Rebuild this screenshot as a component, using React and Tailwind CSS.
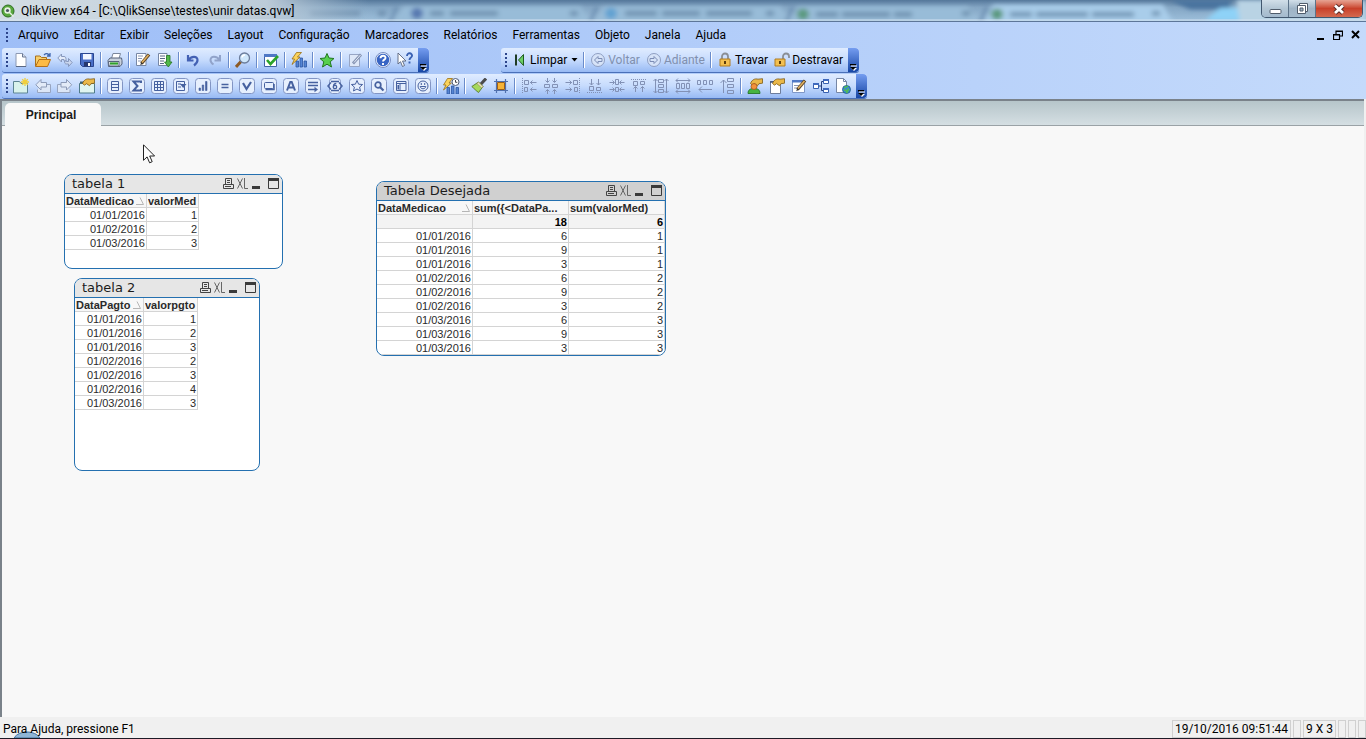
import React from "react";

const INK = "#46619f";
const GREY = "#8291b5";

function Svg({ children, w = 16 }) {
  return (
    <svg width={w} height="16" viewBox={`0 0 ${w} 16`} fill="none" aria-hidden="true">
      {children}
    </svg>
  );
}

function Boxed({ children }) {
  return (
    <Svg>
      <rect x="0.5" y="0.5" width="15" height="15" rx="3" fill="#e6effd" stroke="#8295c4" />
      {children}
    </Svg>
  );
}

const Pencil = () => (
  <>
    <path d="M6.500 11.500L14 2.500" stroke="#5b4324" strokeWidth="3.200" />
    <path d="M7 10.500L13.500 3" stroke="#e2b160" strokeWidth="1.600" />
    <path d="M5.200 13.200l1-3 1.800 1.600z" fill="#333" />
  </>
);
const HandCard = () => (
  <path d="M3.500 5.500C5 1.500 8 0.300 11 1.200l4.500-.5v4.500l-3.500.5-1.500 2-3-2-2 1.500z" fill="#eab849" stroke="#7d5a14" strokeWidth="0.800" />
);

const icons = {
  novo: (
    <Svg>
      <path d="M3 1.500h6.500l3.500 3.500v9.500H3z" fill="#fff" stroke="#8c99b3" />
      <path d="M9.500 1.500V5H13" fill="#d5deec" stroke="#6a7894" />
      <path d="M3 14.500h10" stroke="#5a6884" />
    </Svg>
  ),
  abrir: (
    <Svg>
      <path d="M0.500 14V4h4.500l1.500 1.500h5V8" fill="#f7cf6a" stroke="#a8711c" />
      <path d="M0.500 14.500L4 7.500h11.500l-3 7z" fill="#fdbb45" stroke="#b4701a" />
      <path d="M9 3c2-2 4.500-1.500 5.500.5M15 1v3h-3" stroke="#3e66b0" strokeWidth="1.300" />
    </Svg>
  ),
  atualizar: (
    <Svg>
      <path d="M0.800 6L4.500 2v2.500h2.500c1.500 0 2 1 2 3v1.500H7V7.500H4.500V10z" fill="#e3ebf9" stroke="#8798bd" />
      <path d="M15.200 10.500l-3.700 4V12H9.500c-1.500 0-2-1-2-3h2v.5h2V6.500z" fill="#c9d6ee" stroke="#8798bd" />
    </Svg>
  ),
  salvar: (
    <Svg>
      <path d="M1.500 1.500h13v13h-11l-2-2z" fill="#4a6fc7" stroke="#2b4690" />
      <path d="M4 2h8.500v5.500H4z" fill="#f2f6ff" />
      <path d="M5 10h7v4.500H5z" fill="#26376e" />
      <path d="M9 11h2v3H9z" fill="#fff" />
    </Svg>
  ),
  imprimir: (
    <Svg>
      <path d="M4.500 6.500L6 1.500h7.500l-1.500 5z" fill="#fff" stroke="#7a869b" />
      <path d="M1 8.500L3 6h11.500l.5 2.500V12l-2 2.500H1.500z" fill="#c8d1dc" stroke="#56627a" />
      <path d="M1.500 9.500h10.500v4.500H2z" fill="#eef2f6" stroke="#56627a" />
      <path d="M3 11.500h8" stroke="#31a02c" strokeWidth="2.200" />
    </Svg>
  ),
  editar: (
    <Svg>
      <path d="M1.500 1.500h9.500v12H1.500z" fill="#fff" stroke="#7787a5" />
      <path d="M3 4h5M3 6.500h4M3 9h3" stroke="#8a97b4" />
      <Pencil />
    </Svg>
  ),
  recarregar: (
    <Svg>
      <path d="M1.500 1.500h8.500v12H1.500z" fill="#fff" stroke="#7787a5" />
      <path d="M3 4h5M3 6.500h5M3 9h4M3 11.500h4" stroke="#5a6884" />
      <path d="M9.500 3.500h3.500v6.500h2l-3.700 5L7.500 10h2z" fill="#52b848" stroke="#23751f" strokeWidth="0.800" />
    </Svg>
  ),
  desfazer: (
    <Svg>
      <path d="M3 3v5.500h5.500M3.500 8C6 4 12.500 3.500 12.500 8c0 2-1.500 4-3.500 5.500" stroke="#4361b4" strokeWidth="2.200" />
    </Svg>
  ),
  refazer: (
    <Svg>
      <path d="M13 3v5.500H7.500M12.500 8C10 4 3.500 3.500 3.500 8c0 2 1.500 3.500 3 4.500" stroke="#91a3ca" strokeWidth="2" />
    </Svg>
  ),
  pesquisar: (
    <Svg>
      <path d="M1 15l5-5.500" stroke="#8d5a24" strokeWidth="3" />
      <circle cx="9.500" cy="6" r="5" fill="#cfe7fb" stroke="#6c7d9b" strokeWidth="1.300" />
      <path d="M7 5.500a3 3 0 0 1 3-2.500" stroke="#fff" strokeWidth="1.500" />
    </Svg>
  ),
  selecoes: (
    <Svg>
      <path d="M1.500 2.500h12v12h-12z" fill="#fff" stroke="#3f62a5" />
      <path d="M1 2h13v3H1z" fill="#4f78c6" />
      <path d="M4 8l3.500 4L15 4" stroke="#2ca32a" strokeWidth="2.600" />
    </Svg>
  ),
  grafico: (
    <Svg>
      <path d="M5 15V9h2.500v6zM9 15V6h2.500v9zM13 15V9h2.500v6z" fill="#5585d4" stroke="#2c55a2" strokeWidth="0.800" />
      <path d="M5.500 0.500h5L6.500 5h2.500L1 12.500 3.500 7H1z" fill="#fbd35c" stroke="#9b7012" strokeWidth="0.800" />
    </Svg>
  ),
  estrela: (
    <Svg>
      <path d="M8 1.500l2 4.500 5 .5-3.800 3.300L12.500 15 8 12.200 3.500 15l1.300-5.200L1 6.500 6 6z" fill="#57d04e" stroke="#21771d" />
    </Svg>
  ),
  nota: (
    <Svg>
      <path d="M2.500 2.500h10v12h-10z" fill="#dfe8f8" stroke="#97a5c4" />
      <path d="M6 11.500L14 2.500" stroke="#8492b2" strokeWidth="2.800" />
      <path d="M7 10.500L13.500 3" stroke="#e6edf9" />
    </Svg>
  ),
  ajuda: (
    <Svg>
      <circle cx="8" cy="8" r="7" fill="#3764c4" stroke="#e9effb" strokeWidth="1.500" />
      <circle cx="8" cy="8" r="7.500" stroke="#5a75b3" strokeWidth="0.800" />
      <path d="M5.500 6.300C5.500 2.700 10.800 3 10.500 6 10.400 7.600 8 7.700 8 9.500M8 11v2" stroke="#fff" strokeWidth="1.900" />
    </Svg>
  ),
  contexto: (
    <Svg>
      <path d="M1 1v11l2.500-2.300L5.500 14.500l2-1-2-4.500H9z" fill="#fff" stroke="#58637c" strokeWidth="0.900" />
      <path d="M10 4c0-4 5.500-3.200 5 0-.2 1.600-2.500 1.700-2.500 4M12.500 9.500v2" stroke="#3a62b4" strokeWidth="1.900" />
    </Svg>
  ),
  novaPasta: (
    <Svg>
      <path d="M0.500 3.500h6l1.500 2h6.500v9.500H0.500z" fill="#d9f2ec" stroke="#5d8494" />
      <path d="M12 0v8M8 4h8M9.200 1.200l5.600 5.600M14.800 1.200L9.200 6.800" stroke="#f1cf3c" strokeWidth="1.300" />
    </Svg>
  ),
  pastaEsq: (
    <Svg>
      <path d="M6 6.500h9.500v8H2.500v-3" stroke="#98a5bf" fill="#dce6f6" />
      <path d="M6 1.500v3h5.500V9H6v3L0.800 6.800z" fill="#e3ebf8" stroke="#8d9bb8" />
    </Svg>
  ),
  pastaDir: (
    <Svg>
      <path d="M9 6.500H0.500v8h12.500v-3" stroke="#98a5bf" fill="#dce6f6" />
      <path d="M9.500 1.500v3H4V9h5.500v3l5.200-5.200z" fill="#e3ebf8" stroke="#8d9bb8" />
    </Svg>
  ),
  propPasta: (
    <Svg>
      <path d="M0.500 5.500h15v9.500h-15z" fill="#e0f5f0" stroke="#4f7b88" />
      <path d="M1 4.500h14" stroke="#3b6374" strokeWidth="2" />
      <HandCard />
    </Svg>
  ),
  listBox: (
    <Boxed>
      <path d="M4.500 3.500h7v9h-7zM4.500 6.500h7M4.500 9.500h7" stroke={INK} />
    </Boxed>
  ),
  estatistica: (
    <Boxed>
      <path d="M12 5V3.500H4.500L8.500 8l-4 4.500H12V11" stroke={INK} strokeWidth="2" />
    </Boxed>
  ),
  tabela: (
    <Boxed>
      <path d="M3.500 3.500h9v9h-9zM3.500 6.500h9M3.500 9.500h9M6.500 3.500v9M9.500 3.500v9" stroke={INK} />
    </Boxed>
  ),
  multi: (
    <Boxed>
      <path d="M3.500 3.500h8v9h-8zM5 6h3M5 9h3" stroke={INK} />
      <path d="M7 6h6.500L10.200 10z" fill={INK} />
    </Boxed>
  ),
  barras: (
    <Boxed>
      <path d="M4 12.500v-2.500h1.500v2.500zM7.200 12.500V7h1.500v5.500zM10.500 12.500v-9H12v9z" fill={INK} stroke={INK} strokeWidth="0.600" />
    </Boxed>
  ),
  entrada: (
    <Boxed>
      <path d="M4.500 6.500h7M4.500 9.500h7" stroke={INK} strokeWidth="1.600" />
    </Boxed>
  ),
  selAtual: (
    <Boxed>
      <path d="M4 5l3.500 6L12 4" stroke={INK} strokeWidth="2.200" />
    </Boxed>
  ),
  botao: (
    <Boxed>
      <rect x="3.500" y="4.500" width="9" height="6" rx="1" fill="#e6effd" stroke={INK} />
      <path d="M4.500 11.500h8.500V6" stroke={INK} strokeWidth="1.500" />
    </Boxed>
  ),
  texto: (
    <Boxed>
      <path d="M4 12.500L7.300 4h1.400L12 12.500M5.500 9.500h5" stroke={INK} strokeWidth="2" />
    </Boxed>
  ),
  linha: (
    <Boxed>
      <path d="M3 4.500h10M3 7.500h10M3 11.500h7" stroke={INK} strokeWidth="1.500" />
      <path d="M9.500 8.800l3.500 2.700-3.500 2.700z" fill={INK} />
    </Boxed>
  ),
  deslize: (
    <Svg>
      <rect x="2.500" y="0.500" width="11" height="15" rx="3" fill="#e6effd" stroke="#8295c4" />
      <path d="M4 4.500L0.800 8 4 11.500M12 4.500L15.200 8 12 11.500M4 3.500h8M4 12.500h8" stroke={INK} strokeWidth="1.300" />
      <circle cx="8" cy="9" r="1.700" stroke={INK} strokeWidth="1.300" />
      <path d="M6.500 8.500C6.500 6.500 7.500 5.500 9.300 5.500" stroke={INK} strokeWidth="1.300" />
    </Svg>
  ),
  marcador: (
    <Boxed>
      <path d="M8 2.500l1.600 3.700 4 .3-3 2.600.9 3.900L8 11l-3.500 2 .9-3.900-3-2.600 4-.3z" stroke={INK} />
    </Boxed>
  ),
  pesqObj: (
    <Boxed>
      <circle cx="7" cy="7" r="2.800" stroke={INK} strokeWidth="1.700" />
      <path d="M9 9l3.500 3.500" stroke={INK} strokeWidth="2.200" />
    </Boxed>
  ),
  container: (
    <Boxed>
      <path d="M3.500 3.500h9.500v9H3.500zM3.500 5.500h9.500M7 5.500v7" stroke={INK} />
      <path d="M4.500 7h1.500v4.500H4.500z" fill={INK} />
    </Boxed>
  ),
  custom: (
    <Boxed>
      <circle cx="8" cy="8" r="5" stroke={INK} />
      <path d="M5.200 8.500c.5 3 5.100 3 5.600 0zM6.300 5v2M9.700 5v2" stroke={INK} />
    </Boxed>
  ),
  assistTempo: (
    <Svg w={18}>
      <path d="M5 16V9.500h2.500V16zM9.500 16V8H12v8zM14 16V9.500h2.500V16z" fill="#5585d4" stroke="#2c55a2" strokeWidth="0.800" />
      <path d="M5.500 0.500h5L7 5h2.500L1.500 12 4 7H1.500z" fill="#fbd35c" stroke="#9b7012" strokeWidth="0.800" />
      <circle cx="13.500" cy="4" r="3.500" fill="#fff" stroke="#4e5c78" />
      <path d="M13.500 2v2.300h1.800" stroke="#333" strokeWidth="0.900" />
    </Svg>
  ),
  pincel: (
    <Svg>
      <path d="M15 0.500L9.500 6.500" stroke="#4b4b4b" strokeWidth="3" />
      <path d="M7.500 4l4.500 4.500-4.500 6C5.500 13 3 10.500 0.800 8.500z" fill="#a6d95c" stroke="#58792a" strokeWidth="0.900" />
      <path d="M7.500 4l4.500 4.500-1.200 1.600-5-4.700z" fill="#e9e3c0" stroke="#8e8350" strokeWidth="0.600" />
    </Svg>
  ),
  grade: (
    <Svg>
      <path d="M3.500 1v14M12.500 1v14M1 3.500h14M1 12.500h14" stroke="#5070ae" strokeWidth="1.200" />
      <path d="M4.500 4.500h7v7h-7z" fill="#f6b337" stroke="#9c5f18" />
    </Svg>
  ),
  alEsq: (
    <Svg>
      <path d="M1.500 0v16" stroke={GREY} strokeDasharray="1 1" />
      <path d="M3.500 2.500h4v4h-4zM3.500 9.500h3v4h-3zM9 4.500h6.500M11.500 2.500l-2 2 2 2M9 11.500h6.500M11.500 9.500l-2 2 2 2" stroke={GREY} />
    </Svg>
  ),
  alCentroH: (
    <Svg>
      <path d="M4.500 0v4M11.500 0v4M4.500 12v4M11.500 12v4M2.500 2.500l2 2 2-2M9.500 2.500l2 2 2-2M2.500 13.500l2-2 2 2M9.500 13.500l2-2 2 2M1.500 6.500h5v3h-5zM9.500 6.500h5v3h-5z" stroke={GREY} />
    </Svg>
  ),
  alDir: (
    <Svg>
      <path d="M14.500 0v16" stroke={GREY} strokeDasharray="1 1" />
      <path d="M8.500 2.500h4v4h-4zM9.500 9.500h3v4h-3zM0.500 4.500H7M4.500 2.500l2 2-2 2M0.500 11.500H7M4.500 9.500l2 2-2 2" stroke={GREY} />
    </Svg>
  ),
  alBase: (
    <Svg>
      <path d="M0 14.500h16" stroke={GREY} strokeDasharray="1 1" />
      <path d="M2.500 8.500h4v4h-4zM9.500 9.500h4v3h-4zM4.500 1v6M2.500 5l2 2 2-2M11.500 1v6M9.500 5l2 2 2-2" stroke={GREY} />
    </Svg>
  ),
  alCentroV: (
    <Svg>
      <path d="M6.500 1.500h3v5h-3zM6.500 9.500h3v4h-3zM0.500 4.500H5M3.500 2.500l2 2-2 2M15.500 4.500H11M12.500 2.500l-2 2 2 2M0.500 11.500H5M3.500 9.500l2 2-2 2M15.500 11.500H11M12.500 9.500l-2 2 2 2" stroke={GREY} />
    </Svg>
  ),
  alTopo: (
    <Svg>
      <path d="M0 1.500h16" stroke={GREY} strokeDasharray="1 1" />
      <path d="M2.500 3.500h4v4h-4zM9.500 3.500h4v3h-4zM4.500 14V8.500M2.500 10.500l2-2 2 2M11.500 14V8.500M9.500 10.500l2-2 2 2" stroke={GREY} />
    </Svg>
  ),
  espV: (
    <Svg>
      <path d="M5.500 1.500h5v3h-5zM5.500 6.500h5v3h-5zM5.500 11.500h5v3h-5zM2.500 1v14M13.500 1v14M0.500 3l2-2 2 2M0.500 13l2 2 2-2M11.500 3l2-2 2 2M11.500 13l2 2 2-2" stroke={GREY} />
    </Svg>
  ),
  espH: (
    <Svg>
      <path d="M1.500 5.500h3v5h-3zM6.500 5.500h3v5h-3zM11.500 5.500h3v5h-3zM1 2.500h14M1 13.500h14M3 0.500l-2 2 2 2M13 0.500l2 2-2 2M3 11.500l-2 2 2 2M13 11.500l2 2-2 2" stroke={GREY} />
    </Svg>
  ),
  ajEsq: (
    <Svg>
      <path d="M0.500 2.500h3v4h-3zM6.500 2.500h3v4h-3zM12.500 2.500h3v4h-3zM2 11.500h13M5 8.500l-3 3 3 3" stroke={GREY} />
    </Svg>
  ),
  ajCima: (
    <Svg>
      <path d="M8.500 0.500h6v3h-6zM8.500 6.500h6v3h-6zM8.500 12.500h6v3h-6zM4.500 2v13M1.500 5l3-3 3 3" stroke={GREY} />
    </Svg>
  ),
  usuario: (
    <Svg>
      <path d="M1 15.500c0-4 2.500-5 6-5s6 1 6 5z" fill="#46b443" stroke="#1d6f1c" strokeWidth="0.800" />
      <HandCard />
      <circle cx="7" cy="8.500" r="3" fill="#f1923c" stroke="#a5571a" strokeWidth="0.800" />
    </Svg>
  ),
  propDoc: (
    <Svg>
      <path d="M1.500 3.500h10v12h-10z" fill="#fff" stroke="#6d7d9c" />
      <path d="M1 4h11" stroke="#3f557f" strokeWidth="1.500" />
      <HandCard />
    </Svg>
  ),
  exprDoc: (
    <Svg>
      <path d="M1.500 2.500h12v12h-12z" fill="#fff" stroke="#7f97c6" />
      <path d="M1 2h13v2.500H1z" fill="#4f78c6" />
      <path d="M3 7.500h5M3 10h3" stroke="#8a97b4" />
      <Pencil />
    </Svg>
  ),
  tabelas: (
    <Svg>
      <path d="M5.500 8h3M8.500 3.500v9M8.500 3.500h2M8.500 12.500h2" stroke="#27407e" />
      <path d="M0.500 5.500h5v5h-5zM10.500 1.500h5v4h-5zM10.500 10.500h5v4h-5z" fill="#fff" stroke="#3760b0" />
      <path d="M0 5h6v2H0zM10 1h6v2h-6zM10 10h6v2h-6z" fill="#3f69bd" />
    </Svg>
  ),
  web: (
    <Svg>
      <path d="M1.500 0.500h7l3 3v11h-10z" fill="#fff" stroke="#7787a5" />
      <path d="M8.500 0.500v3h3" stroke="#7787a5" />
      <circle cx="11.500" cy="11.500" r="4" fill="#3a8ccb" stroke="#1f5a8c" strokeWidth="0.800" />
      <path d="M9 9.500c2 0 3-1.500 4-1.500M9 12c2 0 3 1 3 3M14 11c-1 0-1.500 1-1 2.500" stroke="#51bd52" strokeWidth="1.600" />
    </Svg>
  ),
  limpar: (
    <Svg>
      <path d="M4 2.500v11" stroke="#1f3c25" strokeWidth="2" />
      <path d="M11.500 2.500v11L6.500 8z" fill="#6ccf65" stroke="#1f5c1f" />
    </Svg>
  ),
  voltar: (
    <Svg>
      <circle cx="8" cy="8" r="6.500" stroke="#8f9fc2" fill="#d6e3f8" />
      <path d="M8 4.500L4.500 8 8 11.500v-2h4v-3H8z" stroke="#7c8db5" />
    </Svg>
  ),
  adiante: (
    <Svg>
      <circle cx="8" cy="8" r="6.500" stroke="#8f9fc2" fill="#d6e3f8" />
      <path d="M8 4.500L11.500 8 8 11.500v-2H4v-3h4z" stroke="#7c8db5" />
    </Svg>
  ),
  travar: (
    <Svg>
      <path d="M5 7V4.500a3 3 0 0 1 6 0V7" stroke="#8a8f96" strokeWidth="1.800" />
      <path d="M3 7h10v7H3z" fill="#f3c051" stroke="#b07c22" />
      <path d="M8 9v3" stroke="#5b3c0b" strokeWidth="2" />
    </Svg>
  ),
  destravar: (
    <Svg>
      <path d="M9 7V4.500a3 3 0 0 1 6 0V6" stroke="#8a8f96" strokeWidth="1.800" />
      <path d="M1 7h10v7H1z" fill="#f3c051" stroke="#b07c22" />
      <path d="M6 9v3" stroke="#5b3c0b" strokeWidth="2" />
    </Svg>
  ),
};

function Grip() {
  return (
    <svg className="ml-[3px] mr-px shrink-0" width="4" height="14" viewBox="0 0 4 14" aria-hidden="true">
      <path d="M1 0h2v2H1zM1 4h2v2H1zM1 8h2v2H1zM1 12h2v2H1z" fill="#2c448a" />
    </svg>
  );
}

function Separator() {
  return (
    <div className="flex w-[6px] shrink-0 justify-center">
      <div className="h-4 w-px bg-[#6a8ccb]" />
      <div className="h-4 w-px bg-white" />
    </div>
  );
}

function Overflow() {
  return (
    <button
      type="button"
      aria-label="Opções da barra de ferramentas"
      className="ml-0.5 flex w-[11px] shrink-0 items-end justify-center self-stretch rounded-r-sm bg-gradient-to-b from-[#759df0] to-[#1646a6] pb-px"
    >
      <svg width="7" height="7" viewBox="0 0 7 7" aria-hidden="true">
        <path d="M0 0h6v1.500H0z" fill="#000" />
        <path d="M1 1.500h6v1H1z" fill="#fff" />
        <path d="M1 4h6L4 7z" fill="#fff" />
        <path d="M0 3h6L3 6z" fill="#000" />
      </svg>
    </button>
  );
}

function IconButton({ name }) {
  return (
    <button type="button" aria-label={name} className="flex size-[22px] shrink-0 items-center justify-center">
      {icons[name]}
    </button>
  );
}

function TextButton({ name, label, disabled, drop }) {
  return (
    <button
      type="button"
      disabled={disabled}
      className="flex h-[22px] shrink-0 items-center gap-0.5 px-[3px] text-black disabled:text-[#8190ae]"
    >
      {icons[name]}
      <span>{label}</span>
      {drop && (
        <svg className="ml-0.5" width="7" height="4" viewBox="0 0 7 4" aria-hidden="true">
          <path d="M0.500 0h6l-3 3.500z" fill="#000" />
        </svg>
      )}
    </button>
  );
}

function Toolbar({ children }) {
  return (
    <div
      role="toolbar"
      className="flex h-[25px] items-center rounded-[3px] border-b border-[#4a70b8] bg-gradient-to-b from-[#e0ecff] via-[#c6dbfd] to-[#98baf4]"
    >
      <Grip />
      {children}
    </div>
  );
}

function IconGroups({ groups }) {
  return groups.map((group, i) => (
    <React.Fragment key={group[0]}>
      {i > 0 && <Separator />}
      {group.map((name) => (
        <IconButton key={name} name={name} />
      ))}
    </React.Fragment>
  ));
}

const mainGroups = [
  ["novo", "abrir", "atualizar", "salvar"],
  ["imprimir"],
  ["editar", "recarregar"],
  ["desfazer", "refazer"],
  ["pesquisar"],
  ["selecoes"],
  ["grafico"],
  ["estrela"],
  ["nota"],
  ["ajuda", "contexto"],
];

const designGroups = [
  ["novaPasta", "pastaEsq", "pastaDir", "propPasta"],
  ["listBox", "estatistica", "tabela", "multi", "barras", "entrada", "selAtual", "botao", "texto", "linha", "deslize", "marcador", "pesqObj", "container", "custom"],
  ["assistTempo"],
  ["pincel", "grade"],
  ["alEsq", "alCentroH", "alDir", "alBase", "alCentroV", "alTopo", "espV", "espH", "ajEsq", "ajCima"],
  ["usuario", "propDoc", "exprDoc", "tabelas", "web"],
];

const menus = ["Arquivo", "Editar", "Exibir", "Seleções", "Layout", "Configuração", "Marcadores", "Relatórios", "Ferramentas", "Objeto", "Janela", "Ajuda"];

function TitleBar() {
  return (
    <header className="relative flex h-[22px] items-start overflow-hidden border-b border-[#5d7698] bg-[#8fb2d0]">
      <svg className="absolute inset-0 h-full w-full" viewBox="0 0 1366 22" preserveAspectRatio="none" aria-hidden="true">
        <defs>
          <linearGradient id="glass" x1="0" y1="0" x2="0" y2="1">
            <stop offset="0" stopColor="#54779a" />
            <stop offset="0.350" stopColor="#84a6c4" />
            <stop offset="1" stopColor="#9dbfdb" />
          </linearGradient>
          <linearGradient id="glow" x1="0" y1="0" x2="1" y2="0">
            <stop offset="0" stopColor="#d3dde4" />
            <stop offset="0.720" stopColor="#bccbd8" />
            <stop offset="1" stopColor="#a5bccf" stopOpacity="0" />
          </linearGradient>
          <filter id="soft" x="-10%" y="-50%" width="120%" height="200%">
            <feGaussianBlur stdDeviation="2.500" />
          </filter>
        </defs>
        <rect width="1366" height="22" fill="url(#glass)" />
        <g filter="url(#soft)">
          <path d="M395 24l8-17h178l8 17zM595 24l8-17h178l8 17zM790 24l8-17h170l8 17z" fill="#98bcd8" />
          <path d="M985 24l8-19h170l10 19z" fill="#a9cdea" />
          <path d="M390 24l7-17M590 24l7-17M786 24l7-17M980 24l7-17" stroke="#5d80a6" strokeWidth="2.500" />
          <path d="M1170 0h60v10h-40z" fill="#4a739f" />
          <path d="M1205 22l15-14h22l8 14z" fill="#8ed2f7" />
          <path d="M1236 0h130v24h-126z" fill="#b9d3e4" />
          <circle cx="417" cy="14" r="6" fill="#5678b0" />
          <circle cx="611" cy="14" r="6" fill="#62a2d2" />
          <circle cx="803" cy="15" r="6" fill="#5c9a80" />
          <circle cx="997" cy="15" r="6" fill="#5c9a80" />
          <g stroke="#597a9a" strokeWidth="6" opacity="0.550">
            <path d="M310 14h50M430 14h14M450 14h48M625 14h32M662 14h38M706 14h46M816 15h22M842 15h48M894 15h18M1010 15h22M1036 15h52M1092 15h42" />
            <path d="M378 14h8M570 14h8M766 14h8M962 14h8M1152 14h8" />
          </g>
        </g>
        <rect width="370" height="22" fill="url(#glow)" />
        <path d="M0 21h1366" stroke="#d9e6f3" strokeWidth="1" />
      </svg>
      <div className="relative flex h-[22px] grow items-center gap-1.5 pl-px">
        <svg width="14" height="14" viewBox="0 0 14 14" aria-hidden="true">
          <circle cx="7" cy="7" r="6" fill="#58a83c" stroke="#2f6f22" />
          <circle cx="6.500" cy="6.500" r="3.200" fill="#e8f4e2" />
          <circle cx="6.500" cy="6.500" r="1.600" fill="#4b5560" />
          <path d="M8.500 8.500l4 4" stroke="#e8f4e2" strokeWidth="1.500" />
        </svg>
        <h1 className="text-xs text-black">QlikView x64 - [C:\QlikSense\testes\unir datas.qvw]</h1>
      </div>
      <div className="relative mr-[3px] flex h-[18px] overflow-hidden rounded-b-[5px] border border-t-0 border-[#41576f]">
        <button type="button" aria-label="Minimizar" className="flex w-[27px] items-center justify-center border-r border-[#5d7389] bg-gradient-to-b from-[#d2dfe9] via-[#b3c6d5] to-[#a4bacd]">
          <svg width="13" height="16" viewBox="0 0 13 16" aria-hidden="true">
            <rect x="1" y="8.500" width="11" height="4" rx="1" fill="#fff" stroke="#505c6b" />
          </svg>
        </button>
        <button type="button" aria-label="Restaurar" className="flex w-[27px] items-center justify-center border-r border-[#5d7389] bg-gradient-to-b from-[#d2dfe9] via-[#9fb4c6] to-[#a4bacd]">
          <svg width="13" height="16" viewBox="0 0 13 16" aria-hidden="true">
            <path d="M3.500 2.500h8v8h-8z" fill="#fff" stroke="#505c6b" />
            <path d="M1.500 4.500h8v8h-8z" fill="#fff" stroke="#505c6b" />
            <path d="M4 7h3v3H4z" fill="#9fb4c6" stroke="#505c6b" />
          </svg>
        </button>
        <button type="button" aria-label="Fechar" className="flex w-[46px] items-center justify-center bg-gradient-to-b from-[#e6a393] via-[#c8402a] to-[#d4694f]">
          <svg width="14" height="16" viewBox="0 0 14 16" aria-hidden="true">
            <path d="M3 4.500l8 7.500M11 4.500L3 12" stroke="#5a2a26" strokeWidth="4.600" />
            <path d="M3 4.500l8 7.500M11 4.500L3 12" stroke="#fff" strokeWidth="2.800" />
          </svg>
        </button>
      </div>
    </header>
  );
}

function MenuBar() {
  return (
    <nav className="flex h-[26px] items-center pl-0.5">
      <Grip />
      <div className="flex grow items-center gap-[15px] pl-2">
        {menus.map((m) => (
          <button key={m} type="button" className="text-black">
            {m}
          </button>
        ))}
      </div>
      <div className="flex items-center gap-2 pr-1.5">
        <button type="button" aria-label="Minimizar documento">
          <svg width="8" height="10" viewBox="0 0 8 10" aria-hidden="true">
            <path d="M0 8h7v2H0z" fill="#000" />
          </svg>
        </button>
        <button type="button" aria-label="Restaurar documento">
          <svg width="10" height="10" viewBox="0 0 10 10" fill="none" aria-hidden="true">
            <path d="M3 4V1h6.500v5H7M3 1.500h6.500M.5 4.500h6v5h-6zM.5 5h6" stroke="#000" strokeWidth="1.200" />
          </svg>
        </button>
        <button type="button" aria-label="Fechar documento">
          <svg width="9" height="10" viewBox="0 0 9 10" aria-hidden="true">
            <path d="M1 1l7 7M8 1L1 8" stroke="#000" strokeWidth="2" />
          </svg>
        </button>
      </div>
    </nav>
  );
}

function CaptionIcons() {
  return (
    <div className="flex items-center gap-[3px] pb-px">
      <button type="button" aria-label="Imprimir objeto">
        <svg width="11" height="11" viewBox="0 0 11 11" fill="none" aria-hidden="true">
          <path d="M2.500 6.500v-6h6v6M4 2.500h3M4 4.500h3M.5 10.500v-4h10v4zM2 8.500h6" stroke="#444" />
        </svg>
      </button>
      <button type="button" aria-label="Enviar para Excel">
        <svg width="12" height="11" viewBox="0 0 12 11" fill="none" aria-hidden="true">
          <path d="M.5 .5l5 10M5.500 .5l-5 10M7.500 0v10.500H11" stroke="#666" />
        </svg>
      </button>
      <button type="button" aria-label="Minimizar objeto">
        <svg width="9" height="11" viewBox="0 0 9 11" aria-hidden="true">
          <path d="M0 8h8v3H0z" fill="#3a3a3a" />
        </svg>
      </button>
      <button type="button" aria-label="Maximizar objeto" className="pl-1">
        <svg width="11" height="11" viewBox="0 0 11 11" fill="none" aria-hidden="true">
          <path d="M.5 .5h10v10H.5z" stroke="#3a3a3a" />
          <path d="M0 0h11v3H0z" fill="#3a3a3a" />
        </svg>
      </button>
    </div>
  );
}

function SheetObject({ title, className, captionClass, columns, totals, rows }) {
  return (
    <section className={`absolute overflow-hidden rounded-lg border border-[#2470b0] bg-white ${className}`}>
      <div className={`flex h-[19px] items-center justify-between border-b border-[#2470b0] pl-[7px] pr-[3px] ${captionClass}`}>
        <h2 className="font-['DejaVu_Sans',Verdana,sans-serif] text-[13px] leading-[18px] text-[#1c1c1c]">{title}</h2>
        <CaptionIcons />
      </div>
      <table className="table-fixed border-separate border-spacing-0 font-['Liberation_Sans',Arial,sans-serif] text-[11px] leading-[12px] text-[#2a2a2a]">
        <thead>
          <tr>
            {columns.map((c, i) => (
              <th key={c.label} scope="col" className={`h-[14px] border-b border-r border-[#d4d4d4] bg-[#f7f7f7] p-0 pl-px pt-px text-left font-bold ${c.width}`}>
                <div className="flex items-end justify-between overflow-hidden whitespace-nowrap">
                  <span>{c.label}</span>
                  {i === 0 && (
                    <svg className="mr-0.5 mb-0.5" width="8" height="8" viewBox="0 0 8 8" fill="none" aria-hidden="true">
                      <path d="M0 7.500h7.500L4 0.500" stroke="#b5b5b5" />
                    </svg>
                  )}
                </div>
              </th>
            ))}
          </tr>
        </thead>
        <tbody>
          {totals && (
            <tr>
              {totals.map((t, i) => (
                <td key={i} className="h-[14px] border-b border-r border-[#d4d4d4] bg-[#f3f3f3] p-0 pr-px pt-px text-right font-bold text-black">
                  {t}
                </td>
              ))}
            </tr>
          )}
          {rows.map((r, i) => (
            <tr key={i}>
              {r.map((v, j) => (
                <td key={j} className="h-[14px] border-b border-r border-[#d4d4d4] p-0 pr-px pt-px text-right">
                  {v}
                </td>
              ))}
            </tr>
          ))}
        </tbody>
      </table>
    </section>
  );
}

const table1 = [["01/01/2016", 1], ["01/02/2016", 2], ["01/03/2016", 3]];
const table2 = [
  ["01/01/2016", 1],
  ["01/01/2016", 2],
  ["01/01/2016", 3],
  ["01/02/2016", 2],
  ["01/02/2016", 3],
  ["01/02/2016", 4],
  ["01/03/2016", 3],
];
const table3 = ["01/01/2016", "01/02/2016", "01/03/2016"].flatMap((d, i) => [6, 9, 3].map((n) => [d, n, i + 1]));

export default function App() {
  return (
    <div className="flex min-h-screen flex-col bg-[#f0f0f0] font-['Roboto','Noto_Sans',sans-serif] text-xs">
      <TitleBar />
      <div className="flex flex-col bg-gradient-to-r from-[#9ebef7] to-[#c4dafb]">
        <MenuBar />
        <div className="flex pl-0.5">
          <Toolbar>
            <IconGroups groups={mainGroups} />
            <Overflow />
          </Toolbar>
          <div className="w-[72px] shrink-0" />
          <Toolbar>
            <TextButton name="limpar" label="Limpar" drop />
            <Separator />
            <TextButton name="voltar" label="Voltar" disabled />
            <TextButton name="adiante" label="Adiante" disabled />
            <Separator />
            <TextButton name="travar" label="Travar" />
            <TextButton name="destravar" label="Destravar" />
            <Overflow />
          </Toolbar>
        </div>
        <div className="flex pl-0.5 pt-px">
          <Toolbar>
            <IconGroups groups={designGroups} />
            <Overflow />
          </Toolbar>
        </div>
      </div>

      <div className="mr-0.5 flex grow flex-col border-l-2 border-t-2 border-[#7a828a] bg-[#f8f8f8]">
        <div className="flex h-[25px] items-end border-b border-[#9aa2a6] bg-gradient-to-b from-[#b6c5ca] to-[#d5dfe3] pl-[3px]" role="tablist">
          <button type="button" role="tab" aria-selected="true" className="-mb-px h-[23px] w-24 rounded-t-[5px] bg-[#f8f8f8] pr-1 font-['Liberation_Sans',Arial,sans-serif] text-xs font-bold text-[#1c1c1c]">
            Principal
          </button>
        </div>
        <main className="relative min-h-[588px] grow">
          <svg className="absolute left-[141px] top-[18px]" width="13" height="20" viewBox="0 0 13 20" aria-hidden="true">
            <path d="M.5 .8v15.500l3.600-3.400 2.500 5.900 2.600-1.100-2.500-5.700h4.900z" fill="#fff" stroke="#222" />
          </svg>
          <SheetObject
            title="tabela 1"
            className="left-[62px] top-[48px] h-[95px] w-[219px]"
            captionClass="bg-[#e6e6e6]"
            columns={[
              { label: "DataMedicao", width: "w-[82px]" },
              { label: "valorMed", width: "w-[52px]" },
            ]}
            rows={table1}
          />
          <SheetObject
            title="tabela 2"
            className="left-[72px] top-[152px] h-[193px] w-[186px]"
            captionClass="bg-[#e6e6e6]"
            columns={[
              { label: "DataPagto", width: "w-[69px]" },
              { label: "valorpgto", width: "w-[54px]" },
            ]}
            rows={table2}
          />
          <SheetObject
            title="Tabela Desejada"
            className="left-[374px] top-[55px] h-[175px] w-[290px]"
            captionClass="bg-[#d0d0d0]"
            columns={[
              { label: "DataMedicao", width: "w-24" },
              { label: "sum({<DataPa...", width: "w-24" },
              { label: "sum(valorMed)", width: "w-24" },
            ]}
            totals={["", 18, 6]}
            rows={table3}
          />
        </main>
      </div>

      <footer className="relative flex h-[22px] items-center justify-between border-b border-[#1d1a26] bg-[#f0f0f0] pl-[3px] pt-0.5 text-black">
        <svg className="absolute bottom-0 left-[14px]" width="26" height="7" viewBox="0 0 26 7" aria-hidden="true">
          <path d="M0 7C5-1 21-1 26 7z" fill="#8fb5d6" stroke="#3f6f9f" />
        </svg>
        <span className="relative">Para Ajuda, pressione F1</span>
        <div className="flex h-[18px] items-stretch gap-0.5">
          <span className="flex items-center border border-[#d0d0d0] px-0.5">19/10/2016 09:51:44</span>
          <span className="w-2 border border-[#d0d0d0]" />
          <span className="flex items-center border border-[#d0d0d0] px-0.5">9 X 3</span>
          <span className="w-2 border border-[#d0d0d0]" />
          <span className="w-2 border border-[#d0d0d0]" />
          <span className="w-2 border border-[#d0d0d0]" />
        </div>
      </footer>
    </div>
  );
}
